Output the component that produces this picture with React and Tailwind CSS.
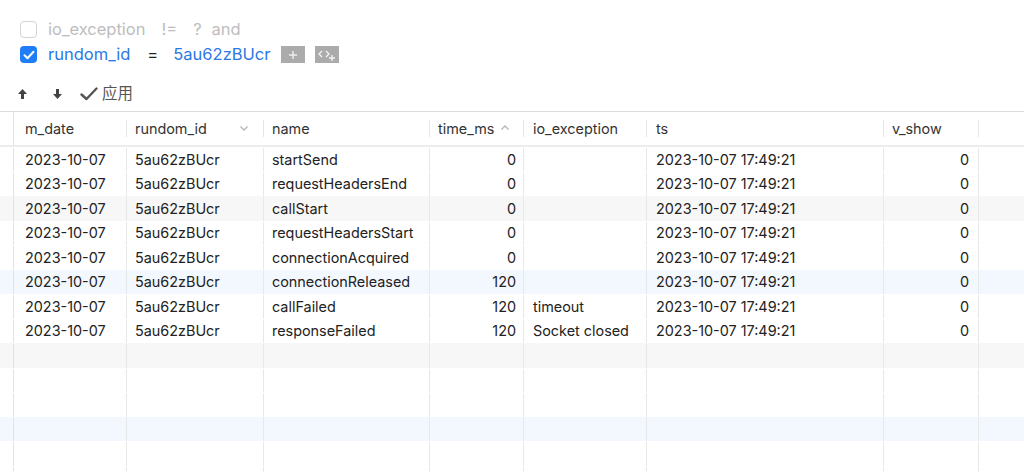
import React from "react";

const cols = [
  { key: "m_date", w: "w-[113px]", pl: "pl-[11px]" },
  { key: "rundom_id", w: "w-[137px]", pl: "pl-[8px]", icon: "down" },
  { key: "name", w: "w-[166px]", pl: "pl-[8px]" },
  { key: "time_ms", w: "w-[94px]", pl: "pl-[8px]", right: true, icon: "up" },
  { key: "io_exception", w: "w-[123px]", pl: "pl-[9px]" },
  { key: "ts", w: "w-[237px]", pl: "pl-[9px]" },
  { key: "v_show", w: "w-[95px]", pl: "pl-[8px]", right: true },
];

const names = [
  ["startSend", "0", ""],
  ["requestHeadersEnd", "0", ""],
  ["callStart", "0", ""],
  ["requestHeadersStart", "0", ""],
  ["connectionAcquired", "0", ""],
  ["connectionReleased", "120", ""],
  ["callFailed", "120", "timeout"],
  ["responseFailed", "120", "Socket closed"],
];

const rows = names.map(([n, t, e]) => ["2023-10-07", "5au62zBUcr", n, t, e, "2023-10-07 17:49:21", "0"]);
while (rows.length < 14) rows.push(null);

function rowBg(i) {
  if (i % 6 === 2) return "bg-[#f7f7f7]";
  if (i % 6 === 5) return "bg-[#f3f8fe]";
  return "bg-white";
}

function Chevron({ dir }) {
  return (
    <svg width="10" height="7" viewBox="0 0 10 7" className="ml-[6px]">
      {dir === "down" ? (
        <path d="M1.5 1.5 L5 5 L8.5 1.5" fill="none" stroke="#b5b5b5" strokeWidth="1.3" />
      ) : (
        <path d="M1.5 5.5 L5 2 L8.5 5.5" fill="none" stroke="#b5b5b5" strokeWidth="1.3" />
      )}
    </svg>
  );
}

export default function App() {
  return (
    <div
      className="w-[1024px] h-[472px] overflow-hidden bg-white text-[#222]"
      style={{ fontFamily: "Inter, 'Noto Sans CJK SC', sans-serif" }}
    >
      {/* filter area */}
      <div className="pt-[21px] pl-[20px] flex flex-col gap-[8px] text-[16.5px]">
        <div className="flex items-center h-[17px]">
          <div className="w-[17px] h-[17px] rounded-[4px] border border-[#d4d4d4] bg-white" />
          <span className="ml-[11px] text-[#bdbdbd]">io_exception</span>
          <span className="ml-[16px] text-[#bdbdbd]">!=</span>
          <span className="ml-[16px] text-[#bdbdbd]">?</span>
          <span className="ml-[10px] text-[#bdbdbd]">and</span>
        </div>
        <div className="flex items-center h-[17px]">
          <div className="w-[17px] h-[17px] rounded-[4px] bg-[#1f7ef5] flex items-center justify-center">
            <svg width="12" height="10" viewBox="0 0 12 10">
              <path d="M1.5 5.2 L4.5 8.2 L10.5 1.8" fill="none" stroke="white" strokeWidth="2" strokeLinecap="round" strokeLinejoin="round" />
            </svg>
          </div>
          <span className="ml-[11px] text-[#2b78e4]">rundom_id</span>
          <span className="ml-[17px] text-[#222]">=</span>
          <span className="ml-[15px] text-[#2b78e4]">5au62zBUcr</span>
          <div className="ml-[11px] w-[24px] h-[17px] bg-[#ababab] flex items-center justify-center">
            <svg width="10" height="10" viewBox="0 0 10 10">
              <path d="M5 1 V9 M1 5 H9" stroke="#efefef" strokeWidth="1.4" />
            </svg>
          </div>
          <div className="ml-[10px] w-[24px] h-[17px] bg-[#ababab] flex items-center justify-center">
            <svg width="20" height="14" viewBox="0 0 20 14">
              <path d="M5 3 L2 6 L5 9 M9 3 L12 6 L9 9" fill="none" stroke="#f3f3f3" strokeWidth="1.3" />
              <path d="M15 7 V13 M12 10 H18" stroke="#f3f3f3" strokeWidth="1.3" />
            </svg>
          </div>
        </div>
      </div>

      {/* toolbar */}
      <div className="mt-[21px] pl-[17px] flex items-center h-[20px] text-[15.5px] text-[#555]">
        <svg width="11" height="12" viewBox="0 0 11 12">
          <path d="M5.5 1 L10 6 H7 V11 H4 V6 H1 Z" fill="#444" />
        </svg>
        <svg width="11" height="12" viewBox="0 0 11 12" className="ml-[24px]">
          <path d="M5.5 11 L10 6 H7 V1 H4 V6 H1 Z" fill="#444" />
        </svg>
        <svg width="18" height="14" viewBox="0 0 18 14" className="ml-[17px]">
          <path d="M1.5 7.5 L6.5 12 L16.5 1.5" fill="none" stroke="#555" strokeWidth="2.4" strokeLinecap="round" strokeLinejoin="round" />
        </svg>
        <span className="ml-[4px]">应用</span>
      </div>

      {/* table */}
      <div className="mt-[7px] border-t border-[#dcdcdc] text-[14.4px]">
        {/* header */}
        <div className="flex h-[35px] border-b-2 border-[#ececec] text-[#333]">
          <div className="w-[14px] shrink-0 border-r border-[#e2e2e2]" />
          {cols.map((c) => (
            <div key={c.key} className={`${c.w} shrink-0 flex items-center relative ${c.pl}`}>
              <span>{c.key}</span>
              {c.icon && (
                <span className={c.icon === "down" ? "ml-auto mr-[15px] flex" : "flex mb-[2px]"}>
                  <Chevron dir={c.icon} />
                </span>
              )}
              <div className="absolute right-0 top-[8px] bottom-[8px] w-px bg-[#e6e6e6]" />
            </div>
          ))}
          <div className="flex-1" />
        </div>
        {/* body */}
        {rows.map((r, i) => (
          <div key={i} className={`flex h-[24.5px] pt-px ${rowBg(i)}`}>
            <div className="w-[14px] shrink-0 border-r border-[#e2e2e2]" />
            {cols.map((c, j) => (
              <div
                key={c.key}
                className={`${c.w} shrink-0 flex items-center border-r border-[#e8e8e8] ${
                  c.right ? (j === 6 ? "justify-end pr-[9px]" : "justify-end pr-[7px]") : c.pl
                }`}
              >
                {r ? r[j] : ""}
              </div>
            ))}
            <div className="flex-1" />
          </div>
        ))}
      </div>
    </div>
  );
}
